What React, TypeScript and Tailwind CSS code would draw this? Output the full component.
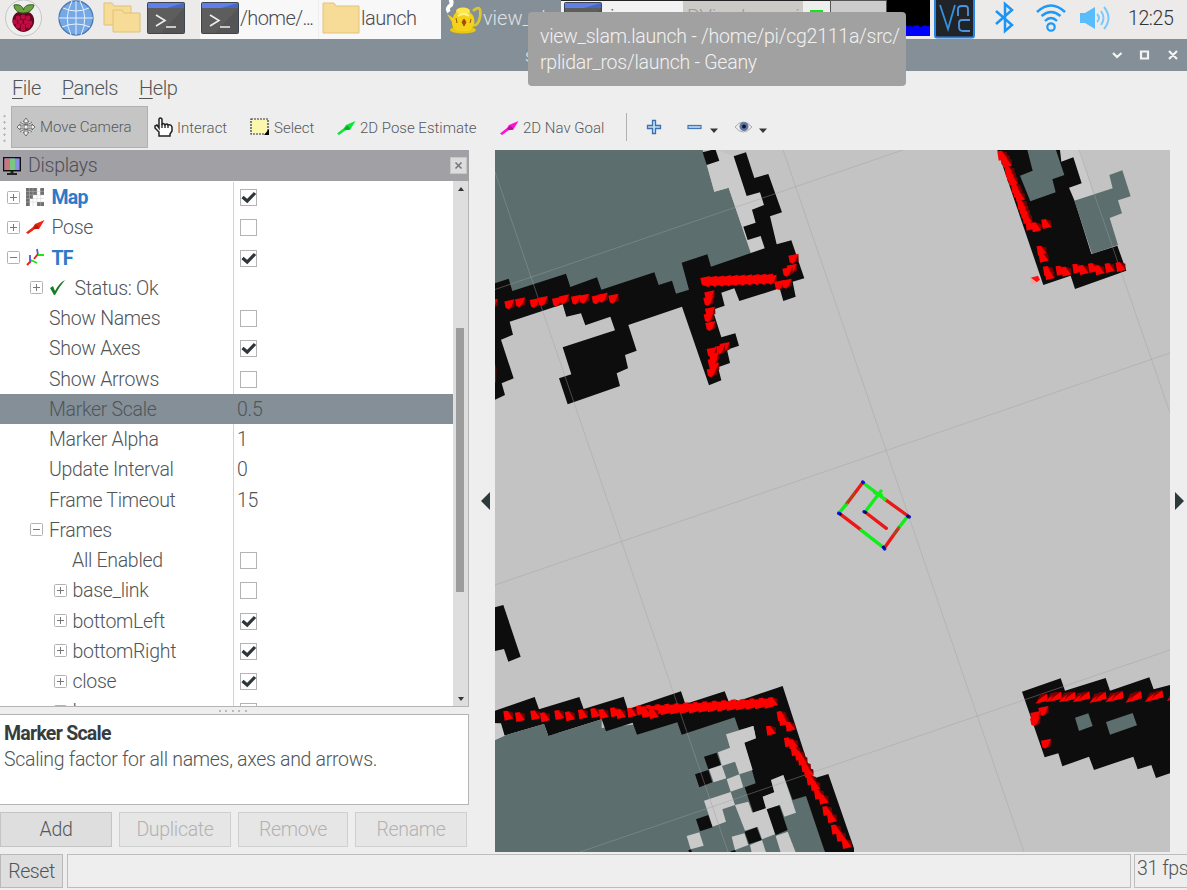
import React from "react";

type Marker = [number, number];

const poly = (fill: string, list: string[]) =>
  list.map((points, i) => <polygon key={fill + i} points={points} fill={fill} />);

const BLACK = "#0d0d0d";
const TEAL = "#5c6e6d";
const LIGHT = "#cacaca";

function Arrows({ at, kind }: { at: Marker[]; kind: "down" | "right" | "left" }) {
  const shapes = {
    down: ["-14,-8 14,-14 6,6 -2,14 -10,10", "14,-14 15,6 -2,14"],
    right: ["-15,-12 -3,-14 13,8 -11,14", "-3,-14 12,-9 13,8"],
    left: ["-20,14 -10,2 12,-14 15,6", "-20,14 -6,-12 12,-14"],
  }[kind];
  return (
    <g>
      {at.map(([x, y], i) => (
        <g key={i} transform={`translate(${x} ${y}) scale(1.08)`}>
          <polygon points={shapes[1]} fill="#7d0000" />
          <polygon points={shapes[0]} fill="#ff0000" />
        </g>
      ))}
    </g>
  );
}

function run(x0: number, y0: number, x1: number, y1: number, n: number): Marker[] {
  return Array.from({ length: n }, (_, i) => [
    x0 + ((x1 - x0) * i) / (n - 1),
    y0 + ((y1 - y0) * i) / (n - 1) + (i % 2 ? 2 : -2),
  ]);
}

function MapView() {
  return (
    <svg className="block h-[702px] w-[675px] bg-[#c3c3c3]" viewBox="495 150 675 702" shapeRendering="auto">
      <g transform="translate(490 145) scale(.33333)">
        {poly(TEAL, ["15,15 638,15 650,58 673,140 716,128 782,323 760,360 600,450 15,450"])}
        {poly(LIGHT, ["676,12 731,34 770,153 810,142 822,180 786,194 797,233 760,245 773,285 812,273 826,308 783,322 716,128 673,140 650,58 688,47"])}
        {poly(BLACK, [
          "638,22 676,12 688,47 650,60",
          "731,34 768,22 793,99 835,87 876,202 840,214 860,298 904,286 943,400 908,410 917,455 880,468 869,430 748,468 733,430 694,443 704,482 668,494 694,577 736,565 747,602 711,614 720,654 684,667 694,706 657,721 576,485 415,540 440,617 405,630 414,670 380,685 390,723 233,778 207,700 244,688 218,607 375,556 361,515 286,541 273,505 229,515 218,478 59,530 69,569 33,584 71,700 35,715 45,750 15,764 15,415 56,401 67,438 228,386 241,426 321,397 334,434 493,382 506,420 546,407 558,446 597,434 575,353 652,328 663,365 824,310 812,273 773,285 760,245 797,233 786,194 822,180 810,142 770,153",
        ])}
      </g>
      <g transform="translate(960 145) scale(.33333)">
        {poly(LIGHT, ["288,15 360,15 400,150 343,167 327,128 365,115 340,37 304,50"])}
        {poly(BLACK, ["112,15 300,15 304,50 340,37 365,115 327,128 345,170 394,327 472,302 499,377 345,432 332,392 250,420"])}
        {poly(TEAL, [
          "202,15 288,15 313,90 277,103 287,142 211,169 180,92 218,77",
          "343,167 458,130 448,90 487,76 512,154 474,166 486,205 449,219 474,300 396,327",
        ])}
      </g>
      <g transform="translate(490 590) scale(.33333)">
        {poly(TEAL, ["15,450 734,370 960,600 1005,787 15,787"])}
        {poly(BLACK, [
          "15,52 40,45 92,200 55,215 42,177 15,183",
          "15,362 134,321 147,358 268,321 281,357 401,320 413,358 573,304 586,342 704,304 719,342 878,288 968,566 1015,552 1092,775 1092,787 1005,787 948,618 908,630 880,555 843,570 853,607 818,620 828,655 790,668 764,592 797,580 763,458 798,445 790,408 747,420 734,382 575,434 562,397 441,434 428,398 348,424 335,388 175,438 162,402 42,437 30,402 15,400",
          "642,500 680,488 693,525 655,538",
          "615,553 655,540 667,577 628,592",
          "618,688 655,675 668,712 630,724",
          "595,781 603,778 606,787 597,787",
          "722,784 735,780 738,787 723,787",
        ])}
        {poly(TEAL, ["42,437 162,402 175,438 335,388 335,460 15,460 15,450"])}
        {poly(LIGHT, ["15,400 33,400 44,437 15,450"])}
        {poly(LIGHT, [
          "708,433 790,408 798,445 763,458 788,540 748,553 735,515 696,528 709,565 671,577 657,538 695,525 684,487 720,473",
          "710,568 748,553 760,592 722,605",
          "642,632 722,606 735,645 697,658 708,695 668,710",
          "735,645 775,635 787,668 828,655 818,620 853,607 843,570 880,555 918,668 883,680 870,645 832,658 855,733 816,748 803,710 765,722",
          "590,738 628,727 641,767 602,778",
          "725,740 763,730 775,765 735,780",
          "780,765 816,750 828,787 785,787",
          "857,738 893,725 917,787 872,787",
        ])}
        {poly(BLACK, ["830,658 868,646 893,720 857,735", "764,725 800,712 815,750 777,762"])}
      </g>
      <g transform="translate(980 660) scale(.33333)">
        {poly(BLACK, ["126,95 242,55 255,92 377,54 390,92 508,52 521,88 570,75 570,340 528,354 514,315 473,328 460,290 342,330 327,290 247,319 235,280 194,292"])}
        {poly(TEAL, ["285,173 325,160 338,198 297,213", "378,186 458,159 471,196 390,224"])}
      </g>
      <g stroke="#a0a0a4" strokeOpacity=".42" strokeWidth="1" fill="none">
        <path d="M495 289.5L903 150M495 585L1170 353M580 852L1170 650M495 172L728 852M783 150L1024 852M1079 150L1170 413" />
      </g>
      <g transform="translate(490 145) scale(.33333)">
        <clipPath id="viewEdge"><rect x="15" y="0" width="1010" height="900" /></clipPath>
        <g clipPath="url(#viewEdge)">
          <Arrows kind="down" at={[[8, 476], [58, 478], [90, 472], [134, 474], [158, 468], [201, 470], [222, 463], [258, 464], [282, 461], [320, 463], [338, 458], [370, 461]]} />
        </g>
        <Arrows kind="down" at={run(646, 410, 845, 402, 20)} />
        <Arrows kind="down" at={[[910, 341], [905, 371], [892, 380], [868, 420], [890, 416], [658, 451], [655, 468], [660, 500], [656, 517], [661, 543], [704, 606], [690, 614], [665, 621], [672, 636], [668, 653], [672, 668], [665, 682]]} />
        <path d="M15 655L19 670L18 715L15 710Z" fill="#8c0000" />
      </g>
      <g transform="translate(960 145) scale(.33333)">
        <Arrows kind="right" at={[[128, 32], [136, 43], [142, 54], [150, 80], [154, 94], [160, 107], [169, 130], [174, 143], [181, 155], [187, 180], [192, 193], [197, 206], [203, 222], [212, 242], [230, 247], [260, 237], [246, 317], [252, 338], [265, 378], [270, 390], [303, 377], [320, 380], [353, 371], [372, 375], [400, 369], [420, 376], [450, 369], [483, 366]]} />
        <polygon points="212,398 234,392 240,404 230,412" fill="#ff1010" />
        <polygon points="212,398 230,412 224,418 214,416" fill="#ff9c9c" />
      </g>
      <g transform="translate(490 590) scale(.33333)">
        <Arrows kind="right" at={[[56, 377], [91, 381], [137, 376], [166, 382], [209, 375], [241, 379], [280, 373], [317, 369], [342, 372], [376, 367], [394, 372], [427, 368]]} />
        <Arrows kind="right" at={run(454, 363, 850, 338, 29)} />
        <Arrows kind="right" at={[[470, 369], [492, 372], [876, 378], [882, 393], [902, 410], [844, 422], [898, 457], [911, 463], [918, 484], [930, 497], [939, 512], [949, 532], [957, 548], [965, 571], [977, 588], [988, 614], [1002, 629], [1013, 663], [1027, 685], [1039, 719], [1054, 740], [1071, 762]]} />
      </g>
      <g transform="translate(980 660) scale(.33333)">
        <Arrows kind="left" at={[[188, 116], [218, 112], [230, 110], [258, 112], [272, 110], [300, 112], [315, 109], [350, 114], [364, 110], [398, 112], [415, 108], [458, 113], [470, 108], [516, 111], [534, 106], [582, 108]]} />
        <Arrows kind="down" at={[[190, 153], [166, 168], [165, 184], [198, 251]]} />
      </g>
      <g transform="translate(820 460) scale(.33333)" fill="none" strokeWidth="10" strokeLinecap="round">
        <path d="M129 67L79 133M195 118L264 168M58 160L122 209M193 264L238 201M135 156L199 205" stroke="#ea1818" />
        <path d="M79 133L58 158M134 72L195 118M124 211L190 262M262 170L238 201M135 156L183 93M164 98L184 105" stroke="#10ee18" />
        <path d="M79 131L104 99M220 225L238 201" stroke="#8a5b12" strokeWidth="4" />
        <path d="M128 66L130 68M56 160L59 161M263 168L268 171M190 262L194 267M132 155L136 157" stroke="#1010e8" />
        <path d="M263 169L264 170M191 261L192 262M136 156L137 157M61 162L62 163" stroke="#111" strokeWidth="7" />
      </g>
    </svg>
  );
}

function Terminal() {
  return (
    <svg className="block h-[32px] w-[38px] shrink-0" viewBox="0 0 38 32">
      <rect x=".5" y=".5" width="37" height="31" rx="1" fill="#555" stroke="#3d4454" />
      <path d="M1 1H37V6H1Z" fill="#5f80e6" />
      <path d="M20 6H37V1Z" fill="#4468c4" />
      <path d="M1 6H37L14 31H1Z" fill="#666" fillOpacity=".5" />
      <path d="M9 13L18 18.5L9 24M19 25H29" fill="none" stroke="#eee" strokeWidth="1.6" />
    </svg>
  );
}

function Folder() {
  return (
    <svg className="block h-[32px] w-[38px] shrink-0" viewBox="0 0 38 32">
      <path d="M1 1H12L14 4H37V31H1Z" fill="#f7dc97" stroke="#e2c27c" />
    </svg>
  );
}

function Raspberry() {
  const dots = [[23, 18], [18, 19], [28, 19], [15, 23], [20.5, 23], [26, 23], [30, 24], [18, 27], [23, 27], [28, 27], [23, 30]];
  return (
    <svg className="block h-[38px] w-[44px]" viewBox="1 0 44 38">
      <circle cx="23.5" cy="18" r="18" fill="#eee" stroke="#c6c6c6" />
      <path d="M23 12C14 10 11 19 13 24C15 29 20 32 23.500 32C28 32 33 28 34 23C35 17 32 10 23 12Z" fill="#650720" />
      {dots.map(([x, y], i) => <circle key={i} cx={x} cy={y - 1} r="2.4" fill="#c00a42" />)}
      <path d="M23 13C17 13 14 9 14 5C19 4 23 6 23.500 10C24 6 28 4 34 5C33 10 29 13 23 13Z" fill="#6da244" stroke="#335c23" />
    </svg>
  );
}

function Globe() {
  return (
    <svg className="block h-[36px] w-[36px]" viewBox="0 0 36 36">
      <circle cx="18" cy="18" r="17" fill="#77a8e6" stroke="#477ab5" strokeWidth="1.3" />
      <path d="M18 1V35M1 18H35M5 8Q18 14 31 8M4 27Q18 21 32 27M14 1Q5 18 13 35M22 1Q31 18 23 35" stroke="#e5f0fc" strokeWidth="1" fill="none" />
    </svg>
  );
}

function Teapot() {
  return (
    <svg className="block h-[38px] w-[40px] shrink-0" viewBox="0 0 40 38">
      <path d="M6 1Q10 0 8 5Q3 8 6 12" stroke="#fff" strokeWidth="4" fill="none" />
      <path d="M30 11Q39 3 37 17Q35 27 29 25" stroke="#d9c632" strokeWidth="2.8" fill="none" />
      <ellipse cx="20" cy="30" rx="13" ry="3.5" fill="#e8c612" />
      <path d="M4 14L10 18Q12 10 20 10Q28 10 31 18Q33 26 26 31H14Q8 27 9 22Z" fill="#f5d21a" />
      <ellipse cx="20" cy="11" rx="7" ry="3.500" fill="#fee74b" />
      <path d="M15 16Q21 12 26 16" stroke="#fff58b" strokeWidth="2" fill="none" />
      <path d="M21 19L23 22L21 26L19 22ZM13 18L14 23M28 19L27 23" fill="#d4300c" stroke="#8e570a" strokeWidth="1" />
    </svg>
  );
}

function Taskbar() {
  return (
    <header className="flex h-[39px] w-full shrink-0 overflow-hidden bg-[#edeaea] text-[20px] text-[#4b4b50]">
      <div className="flex w-[200px] shrink-0">
        <div className="ml-[1px] w-[57px]"><Raspberry /></div>
        <div className="w-[44px]"><Globe /></div>
        <svg className="mt-[2px] block h-[32px] w-[45px]" viewBox="0 0 45 32">
          <path d="M2 1H10L12 4H29V23H2Z" fill="#f7dc97" stroke="#dfc078" />
          <path d="M11 8H20L22 11H38V30H11Z" fill="#f7dc97" stroke="#dfc078" />
        </svg>
        <div className="mt-[2px]"><Terminal /></div>
      </div>
      <div className="flex w-[119px] shrink-0 border-r border-[#eee] bg-[#f8f8f8] pl-[1px] pt-[2px]">
        <Terminal /><span className="whitespace-nowrap pl-[1px] leading-[33px] tracking-[-0.6px]">/home/<span className="tracking-[-1.4px]">...</span></span>
      </div>
      <div className="flex w-[122px] shrink-0 bg-[#f8f8f8] pl-[3px] pt-[2px]">
        <Folder /><span className="pl-[1px] leading-[33px] tracking-[-0.5px]">launch</span>
      </div>
      <div className="flex w-[120px] shrink-0 bg-[#848f97] pl-[2px] text-[#dfe2e4]">
        <Teapot /><span className="whitespace-nowrap leading-[36px]">view_sl...</span>
      </div>
      <div className="flex w-[122px] shrink-0 overflow-hidden border-t border-[#222] bg-[#f2f2f2] pl-[3px] pt-[1px]">
        <Terminal /><span className="pl-[8px] leading-[31px]">javaw</span>
      </div>
      <div className="w-[120px] shrink-0 overflow-hidden whitespace-nowrap border-t border-[#222] bg-[#cbcac7] pl-[4px] leading-[33px] text-[#999]">RViz slam.rviz</div>
      <div className="w-[27px] shrink-0 border-t border-[#222] bg-[#eee] px-[7px] pt-[9px]"><div className="h-[5px] bg-[#12e912]" /></div>
      <div className="w-[57px] shrink-0 border border-[#555] bg-[#ccc]" />
      <div className="mr-[4px] flex h-[36px] w-[43px] shrink-0 items-end bg-black">
        <svg className="h-[12px] w-full" viewBox="0 0 43 12"><path d="M0 2H18L19 3V1L21 2V3L23 1L25 3L27 1V2L31 1L33 3L36 2L38 1L40 2H43V12H0Z" fill="#0000fa" /></svg>
      </div>
      <svg className="block h-[39px] w-[41px] shrink-0" viewBox="0 0 41 39">
        <rect x="1" y="-3" width="39" height="40.500" rx="2" fill="#202428" stroke="#2684e6" strokeWidth="2" />
        <path d="M6 5L14 29L21 5" fill="none" stroke="#3491dd" strokeWidth="1.800" />
        <path d="M24 16V9Q24 6 28 6H31Q34 6 34 9V16M36 20H28Q25 20 25 23V27Q25 31 29 31H36" fill="none" stroke="#4b94dc" strokeWidth="1.800" />
      </svg>
      <svg className="ml-[20px] block h-[36px] w-[20px] shrink-0" viewBox="0 0 20 36">
        <path d="M1 11L17 25L10 31V4L17 10L1 24" fill="none" stroke="#1a94f5" strokeWidth="2.500" />
      </svg>
      <svg className="ml-[20px] block h-[36px] w-[32px] shrink-0" viewBox="0 0 32 36">
        <path d="M2 12Q16 -1 30 12M6.500 16Q16 8 25.500 16M10 21Q16 15 22 21" fill="none" stroke="#1d9af8" strokeWidth="2.400" />
        <circle cx="16" cy="27" r="3.700" fill="none" stroke="#1d9af8" strokeWidth="2.200" />
      </svg>
      <svg className="ml-[10px] block h-[36px] w-[34px] shrink-0" viewBox="0 0 34 36">
        <path d="M3 13H8L18 7V29L8 23H3Z" fill="#58bdfa" />
        <path d="M20 14Q24 18 20 22M24 11Q29 18 24 25M27 7Q36 18 27 29" fill="none" stroke="#78caff" strokeWidth="2" />
      </svg>
      <span className="ml-[17px] text-[19.500px] leading-[37px] tracking-[-0.4px] text-[#343434]">12:25</span>
    </header>
  );
}

function ArrowIcon({ color }: { color: string }) {
  return (
    <svg className="block h-[16px] w-[20px] shrink-0" viewBox="0 0 20 16">
      <path d="M0 13.500L7 8L9 5L18.500 1L13 10L9 10L2 15Z" fill={color} />
      <path d="M7 9L10 5.500L12 7L13 9L9.500 10.500Z" fill="#000" fillOpacity=".25" />
    </svg>
  );
}

function Toolbar() {
  return (
    <div className="flex h-[45px] shrink-0 items-start text-[15px] text-[#55595c]">
      <div className="ml-[3px] mt-[8px] h-[30px] w-[3px] bg-[radial-gradient(circle,#b5b5b5_1px,transparent_1.2px)] bg-[length:3px_6.2px]" />
      <div className="ml-[5px] mt-[1px] flex h-[42px] w-[137px] items-center border border-[#b0b0b0] bg-[#c5c5c5] pl-[4px]">
        <svg className="mr-[4px] h-[20px] w-[20px]" viewBox="0 0 20 20">
          <path d="M10 1L13 5H11V9H16V7L19 10L16 13V11H11V15H13L10 19L7 15H9V11H4V13L1 10L4 7V9H9V5H7ZM4 5Q10 10 16 5M4 15Q10 10 16 15" fill="#eee" stroke="#555" strokeWidth=".8" />
        </svg>
        <span className="whitespace-nowrap pt-[1px]">Move Camera</span>
      </div>
      <div className="ml-[6px] flex h-[45px] w-[96px] items-center">
        <svg className="mr-[4px] -mt-[2px] h-[20px] w-[19px]" viewBox="0 0 19 20">
          <path d="M5 19V15L1 11V9L3 8L5 11V2Q6 0 8 2V8Q9 5 11 8Q13 6 14 8Q17 7 18 10V14L16 17V19Z" fill="#fff" stroke="#222" strokeWidth="1.500" />
          <path d="M8 7V11M11 8V11M14 8V11" stroke="#222" strokeWidth="1.300" />
        </svg>
        <span className="pt-[1px]">Interact</span>
      </div>
      <div className="flex h-[45px] w-[87px] items-center">
        <svg className="-mt-[2px] mr-[5px] h-[17px] w-[19px]" viewBox="0 0 19 17">
          <rect x="1" y="1" width="17" height="15" fill="#fbf7ae" stroke="#333" strokeWidth="1.200" strokeDasharray="2 1" />
          <path d="M19 11V17H14Z" />
        </svg>
        <span className="pt-[1px]">Select</span>
      </div>
      <div className="flex h-[45px] w-[162px] items-center"><div className="mr-[3px]"><ArrowIcon color="#0be831" /></div><span className="whitespace-nowrap pt-[1px]">2D Pose Estimate</span></div>
      <div className="flex h-[45px] w-[127px] items-center"><div className="mr-[3px] ml-[1px]"><ArrowIcon color="#ff10d5" /></div><span className="whitespace-nowrap pt-[1px]">2D Nav Goal</span></div>
      <div className="mt-[8px] h-[28px] w-[1px] bg-[#b2b2b2]" />
      <svg className="h-[45px] w-[150px]" viewBox="0 0 150 45">
        <path d="M25.500 15.500H28.500V20.500H33.500V23.500H28.500V28.500H25.500V23.500H20.500V20.500H25.500Z" fill="#c2def5" stroke="#3971b5" strokeWidth="1.300" />
        <rect x="61" y="20.500" width="13" height="3" fill="#b1d2f2" stroke="#4277b4" strokeWidth="1.200" />
        <path d="M83 23.500H91L87 28ZM132 23.500H140L136 28Z" fill="#333839" />
        <path d="M108 22Q116 12 125 22Q116 32 108 22Z" fill="#eee" stroke="#aaa" />
        <circle cx="117" cy="21.500" r="4.500" fill="#6176a5" /><circle cx="117" cy="21.500" r="2" fill="#111432" />
      </svg>
    </div>
  );
}

function Expander({ open }: { open: boolean }) {
  return (
    <svg className="block h-[13px] w-[13px] shrink-0" viewBox="0 0 13 13">
      <rect x=".5" y=".5" width="12" height="12" rx="1" fill="#fff" stroke="#b2b2b2" />
      <path d={open ? "M3 6.500H10" : "M3 6.500H10M6.500 3V10"} stroke="#777" />
    </svg>
  );
}

function Check({ on }: { on: boolean }) {
  return (
    <svg className="block h-[17px] w-[17px] shrink-0" viewBox="0 0 17 17">
      <rect x=".5" y=".5" width="16" height="16" fill="#fff" stroke="#b4b4b4" />
      {on && <path d="M2.500 8L7.200 12L15 4" fill="none" stroke="#2d3638" strokeWidth="3.200" />}
    </svg>
  );
}

function MapIcon() {
  return (
    <svg className="block h-[19px] w-[19px]" viewBox="0 0 19 19">
      <path d="M0 0H11V7H7V11H4V18H0ZM14 0H18V7H14ZM11 14H18V18H11Z" fill="#707070" />
      <path d="M0 3.500H18M0 7H18M0 10.500H18M0 14H18M3.500 0V18M7 0V18M11 0V18M14.500 0V18" stroke="#c8c8c8" strokeWidth=".4" />
    </svg>
  );
}

function TfIcon() {
  return (
    <svg className="block h-[19px] w-[19px]" viewBox="0 0 19 19" fill="none" strokeWidth="1.800">
      <path d="M1 17L5 13M8 11L12 6" stroke="#e72020" strokeWidth="2" />
      <path d="M4 7V13M11 1L12 7" stroke="#5353ef" /><path d="M5 12L11 15M12 7H18" stroke="#19e519" />
    </svg>
  );
}

type Row = { label: string; pad: string; exp?: "open" | "shut"; icon?: React.ReactNode; bold?: boolean; check?: boolean; value?: string; selected?: boolean };

const rows: Row[] = [
  { label: "Map", pad: "pl-[7px]", exp: "shut", icon: <MapIcon />, bold: true, check: true },
  { label: "Pose", pad: "pl-[7px]", exp: "shut", icon: <ArrowIcon color="#f0250f" />, check: false },
  { label: "TF", pad: "pl-[7px]", exp: "open", icon: <TfIcon />, bold: true, check: true },
  { label: "Status: Ok", pad: "pl-[30px]", exp: "shut", icon: <svg className="block h-[17px] w-[17px]" viewBox="0 0 17 17"><path d="M1 9L4 7L6 12Q10 4 16 1Q10 8 6 16H5Z" fill="#177d22" /></svg> },
  { label: "Show Names", pad: "pl-[49px]", check: false },
  { label: "Show Axes", pad: "pl-[49px]", check: true },
  { label: "Show Arrows", pad: "pl-[49px]", check: false },
  { label: "Marker Scale", pad: "pl-[49px]", value: "0.5", selected: true },
  { label: "Marker Alpha", pad: "pl-[49px]", value: "1" },
  { label: "Update Interval", pad: "pl-[49px]", value: "0" },
  { label: "Frame Timeout", pad: "pl-[49px]", value: "15" },
  { label: "Frames", pad: "pl-[30px]", exp: "open" },
  { label: "All Enabled", pad: "pl-[72px]", check: false },
  { label: "base_link", pad: "pl-[53.500px]", exp: "shut", check: false },
  { label: "bottomLeft", pad: "pl-[53.500px]", exp: "shut", check: true },
  { label: "bottomRight", pad: "pl-[53.500px]", exp: "shut", check: true },
  { label: "close", pad: "pl-[53.500px]", exp: "shut", check: true },
  { label: "laser", pad: "pl-[53.500px]", exp: "shut", check: false },
];

function TreeRow({ row }: { row: Row }) {
  return (
    <div className={`flex h-[30.25px] shrink-0 ${row.selected ? "bg-[#848f97]" : ""}`}>
      <div className={`flex w-[234px] shrink-0 items-center border-r ${row.selected ? "border-[#848f97]" : "border-[#d2d2d2]"} ${row.pad}`}>
        {row.exp && <div className="mr-[6px]"><Expander open={row.exp === "open"} /></div>}
        {row.icon && <div className="flex w-[25.500px] shrink-0">{row.icon}</div>}
        <span className={`whitespace-nowrap pt-[1px] ${row.bold ? "font-bold tracking-[-0.8px] text-[#2c7bc8]" : ""}`}>{row.label}</span>
      </div>
      <div className="flex items-center">
        {row.check !== undefined && <div className="ml-[6px] pt-[1px]"><Check on={row.check} /></div>}
        {row.value && <span className="pl-[3px] pt-[1px]">{row.value}</span>}
      </div>
    </div>
  );
}

function DisplaysPanel() {
  return (
    <aside className="flex h-[702px] w-[469px] shrink-0 flex-col text-[19.500px] tracking-[-0.3px]">
      <div className="flex h-[31px] shrink-0 items-center bg-[#a1a0a5] pl-[3px] text-[#4d4f55]">
        <svg className="h-[20px] w-[18px]" viewBox="0 0 18 20">
          <rect x=".7" y="1.700" width="16.600" height="13" fill="#898fe9" stroke="#101010" strokeWidth="1.400" />
          <path d="M1.500 2.500H7V14H1.500Z" fill="#c77" /><path d="M7 2.500H12V14H7Z" fill="#79c783" />
          <path d="M7.500 15H10.500V17H14V19H4V17H7.500Z" fill="#222" />
        </svg>
        <span className="ml-[7px] flex-1 pt-[1px]">Displays</span>
        <svg className="mr-[2px] h-[17px] w-[17px]" viewBox="0 0 17 17"><rect x=".5" y=".5" width="16" height="16" fill="#dcdcdc" stroke="#c7c7c7" /><path d="M5.500 5.500L11.500 11.500M11.500 5.500L5.500 11.500" stroke="#777" strokeWidth="1.600" /></svg>
      </div>
      <div className="flex h-[526px] shrink-0 border-b border-r border-[#b4b4b4] bg-white">
        <div className="flex w-[453px] flex-col overflow-hidden pt-[1px]">{rows.map((row) => <TreeRow key={row.label} row={row} />)}</div>
        <div className="flex flex-1 flex-col items-center bg-[#dedede] pb-[4px] pt-[5px]">
          <svg className="h-[6px] w-[6px] shrink-0" viewBox="0 0 6 6"><path d="M0 5H6L3 1Z" fill="#333" /></svg>
          <div className="mr-[1px] mt-[136px] h-[264px] w-[8px] shrink-0 bg-[#9c9c9c]" />
          <div className="flex-1" />
          <svg className="h-[6px] w-[6px] shrink-0" viewBox="0 0 6 6"><path d="M0 1H6L3 5Z" fill="#333" /></svg>
        </div>
      </div>
      <div className="flex h-[7px] shrink-0 items-center justify-center gap-[4.500px] pr-[4px]">
        {[0, 1, 2, 3, 4].map((i) => <div key={i} className="h-[2px] w-[2px] bg-[#bbb]" />)}
      </div>
      <div className="h-[91px] shrink-0 border border-l-0 border-[#b4b4b4] bg-white pl-[4px] pt-[6px] leading-[26px]">
        <div className="font-bold tracking-[-0.75px] text-[#363d3e]">Marker Scale</div>
        <div>Scaling factor for all names, axes and arrows.</div>
      </div>
      <div className="mt-[7px] flex h-[35px] shrink-0 gap-[7px] text-[#b2b2b2]">
        <button className="w-[112px] border border-[#c4c4c4] bg-[#dedede] pt-[1px] text-[#54585b]">Add</button>
        <button className="w-[112px] border border-[#cfcfcf] bg-[#e6e6e6] pt-[1px]">Duplicate</button>
        <button className="w-[110px] border border-[#cfcfcf] bg-[#e6e6e6] pt-[1px]">Remove</button>
        <button className="w-[112px] border border-[#cfcfcf] bg-[#e6e6e6] pt-[1px]">Rename</button>
      </div>
    </aside>
  );
}

export default function App() {
  return (
    <div className="relative flex h-[890px] w-[1187px] flex-col overflow-hidden bg-[#eee] font-[Roboto,sans-serif] text-[19px] font-light text-[#505558]">
      <Taskbar />
      <div className="flex h-[32px] shrink-0 items-center justify-between bg-[#848f97] pl-[525px] pr-[8px] text-[18px] text-[#e4e4e4]">
        <span>slam.rviz - RViz</span>
        <svg className="h-[12px] w-[68px]" viewBox="0 0 68 12" fill="none" stroke="#f4f4f4" strokeWidth="2.200"><path d="M2 4L6 8L10.500 4M30 2.500H37V9.500H30ZM58 2L66 10M66 2L58 10" /></svg>
      </div>
      <nav className="flex h-[34px] shrink-0 items-center gap-[21px] pl-[12px] text-[20px] tracking-[-0.45px]">
        <span><u className="decoration-1 underline-offset-[3px]">F</u>ile</span>
        <span><u className="decoration-1 underline-offset-[3px]">P</u>anels</span>
        <span><u className="decoration-1 underline-offset-[3px]">H</u>elp</span>
      </nav>
      <Toolbar />
      <main className="flex h-[702px] shrink-0">
        <DisplaysPanel />
        <div className="flex w-[26px] shrink-0 items-center pl-[11px]"><svg className="h-[18px] w-[11px]" viewBox="0 0 11 18"><path d="M10 0V18L1 9Z" fill="#2e3939" /></svg></div>
        <MapView />
        <div className="flex w-[17px] shrink-0 items-center pl-[5px]"><svg className="h-[18px] w-[10px]" viewBox="0 0 10 18"><path d="M0 0V18L9 9Z" fill="#2e3939" /></svg></div>
      </main>
      <footer className="flex h-[38px] shrink-0 pt-[2px] text-[19.500px] tracking-[-0.4px]">
        <button className="h-[34px] w-[63px] shrink-0 border border-[#b9b9b9] bg-[#dedede] pt-[2px]">Reset</button>
        <div className="ml-[4px] h-[34px] w-[1064px] shrink-0 border border-[#bdbdbd] bg-[#eee]" />
        <div className="ml-[3px] h-[34px] flex-1 whitespace-nowrap border border-r-0 border-[#bdbdbd] pl-[2px] leading-[28px]">31 fps</div>
      </footer>
      <div className="absolute left-[528px] top-[12px] h-[74px] w-[378px] whitespace-nowrap rounded-[4px] bg-[#a1a1a1] pl-[12px] pt-[12px] text-[19.500px] leading-[26px] tracking-[-0.25px] text-[#f1f1f1]">
        view_slam.launch - /home/pi/cg2111a/src/<br />rplidar_ros/launch - Geany
      </div>
    </div>
  );
}
